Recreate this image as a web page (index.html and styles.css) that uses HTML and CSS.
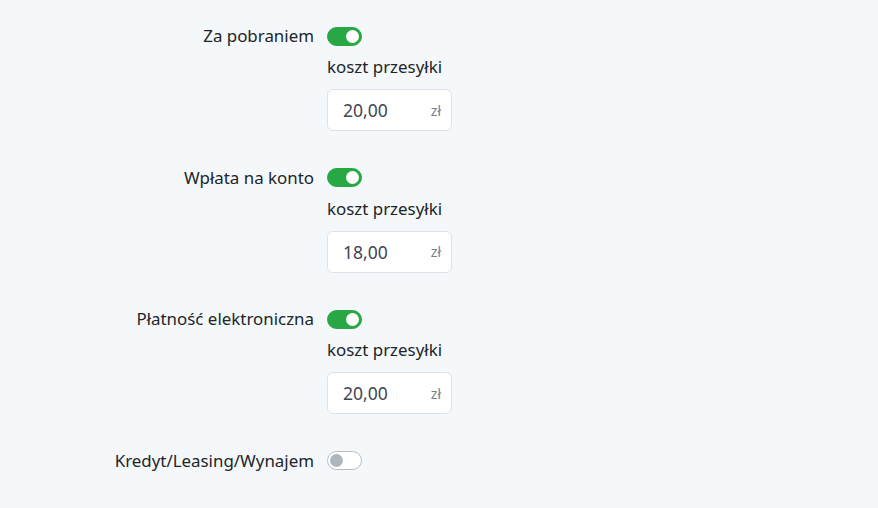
FILE: index.html
```html
<!DOCTYPE html>
<html lang="pl">
<head>
<meta charset="utf-8">
<link rel="stylesheet" href="styles.css">
</head>
<body>
<div class="page">
  <div class="group">
    <div class="label">Za pobraniem</div>
    <div class="ctrl"><span class="switch on"></span></div>
    <div class="sub">
      <div class="sublabel">koszt przesyłki</div>
      <div class="input"><span class="val">20,00</span><span class="cur">zł</span></div>
    </div>
  </div>
  <div class="group">
    <div class="label">Wpłata na konto</div>
    <div class="ctrl"><span class="switch on"></span></div>
    <div class="sub">
      <div class="sublabel">koszt przesyłki</div>
      <div class="input"><span class="val">18,00</span><span class="cur">zł</span></div>
    </div>
  </div>
  <div class="group">
    <div class="label">Płatność elektroniczna</div>
    <div class="ctrl"><span class="switch on"></span></div>
    <div class="sub">
      <div class="sublabel">koszt przesyłki</div>
      <div class="input"><span class="val">20,00</span><span class="cur">zł</span></div>
    </div>
  </div>
  <div class="group">
    <div class="label">Kredyt/Leasing/Wynajem</div>
    <div class="ctrl"><span class="switch"></span></div>
  </div>
</div>
</body>
</html>
```
FILE: styles.css
```css
html, body {
  margin: 0;
  padding: 0;
  background: #f5f8fb;
  font-family: "Noto Sans", "DejaVu Sans", sans-serif;
  color: #212529;
  font-size: 16.9px;
}
.page {
  padding-top: 24px;
}
.group {
  display: grid;
  grid-template-columns: 314px 1fr;
  column-gap: 13px;
  margin-bottom: 34.5px;
}
.label {
  text-align: right;
  line-height: 24px;
  height: 24px;
}
.ctrl {
  display: flex;
  align-items: center;
  height: 24px;
}
.sub {
  grid-column: 2;
  margin-top: 7px;
}
.sublabel {
  line-height: 24px;
}
.switch {
  display: block;
  box-sizing: border-box;
  width: 35px;
  height: 19px;
  border-radius: 10px;
  border: 1px solid #b9bec4;
  background: #fff;
  position: relative;
}
.switch::after {
  content: "";
  position: absolute;
  top: 2px;
  left: 2px;
  width: 13px;
  height: 13px;
  border-radius: 50%;
  background: #adb5bd;
}
.switch.on {
  background: #28a745;
  border-color: #28a745;
}
.switch.on::after {
  left: auto;
  right: 2px;
  background: #fff;
}
.input {
  margin-top: 10px;
  box-sizing: border-box;
  width: 125px;
  height: 42px;
  background: #fff;
  border: 1px solid #dee2e6;
  border-radius: 6px;
  display: flex;
  align-items: center;
  justify-content: space-between;
  padding: 0 10px 0 15px;
}
.val {
  color: #3f4650;
  font-size: 17.5px;
}
.cur {
  color: #7a8088;
  font-size: 14px;
}
```
